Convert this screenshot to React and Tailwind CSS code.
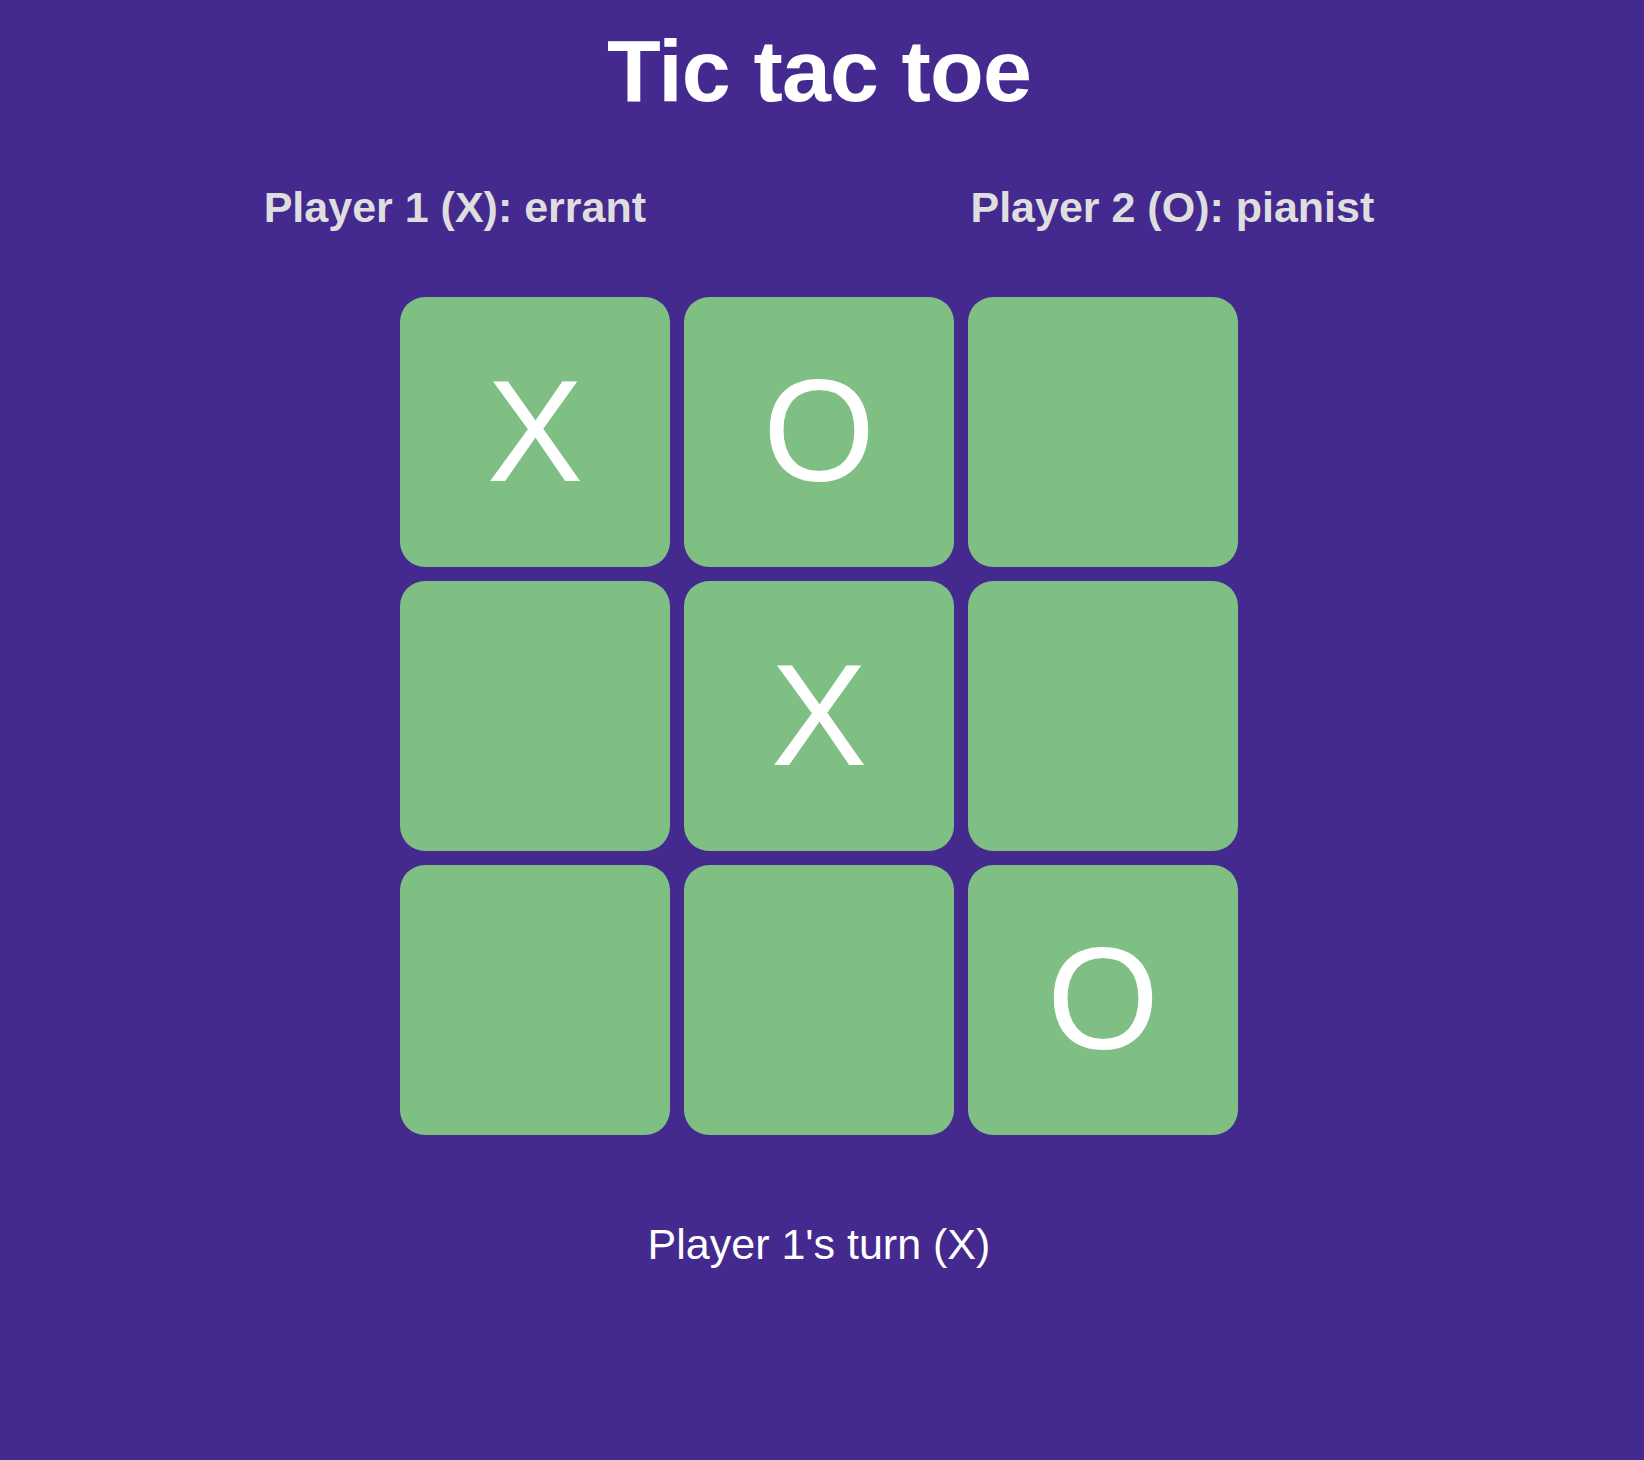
import { useState } from "react";

const App = () => {
  const [board] = useState(["X", "O", "", "", "X", "", "", "", "O"]);
  const [players] = useState({ x: "errant", o: "pianist" });

  return (
    <div
      className="min-h-[1460px] w-full bg-[#44298f] text-white"
      style={{ fontFamily: '"Liberation Sans", Arial, sans-serif' }}
    >
      <div className="flex flex-col items-center pr-[6px]">
        <h1 className="mt-[27px] text-[88px] font-bold leading-none tracking-[-0.01em]">
          Tic tac toe
        </h1>

        <div className="mt-[71px] flex w-[1435px] justify-around">
          <h2 className="text-[43px] font-bold leading-none text-[#dedede]">
            Player 1 (X): {players.x}
          </h2>
          <h2 className="text-[43px] font-bold leading-none text-[#dedede]">
            Player 2 (O): {players.o}
          </h2>
        </div>

        <div className="mt-[68px] grid grid-cols-[repeat(3,270px)] gap-[14px]">
          {board.map((cell, i) => (
            <button
              key={i}
              className="flex h-[270px] w-[270px] items-center justify-center rounded-[25px] bg-[#80bf84] text-[144px] leading-none text-white"
            >
              {cell}
            </button>
          ))}
        </div>

        <p className="mt-[88px] text-[43px] leading-none">Player 1's turn (X)</p>
      </div>
    </div>
  );
};

export default App;
